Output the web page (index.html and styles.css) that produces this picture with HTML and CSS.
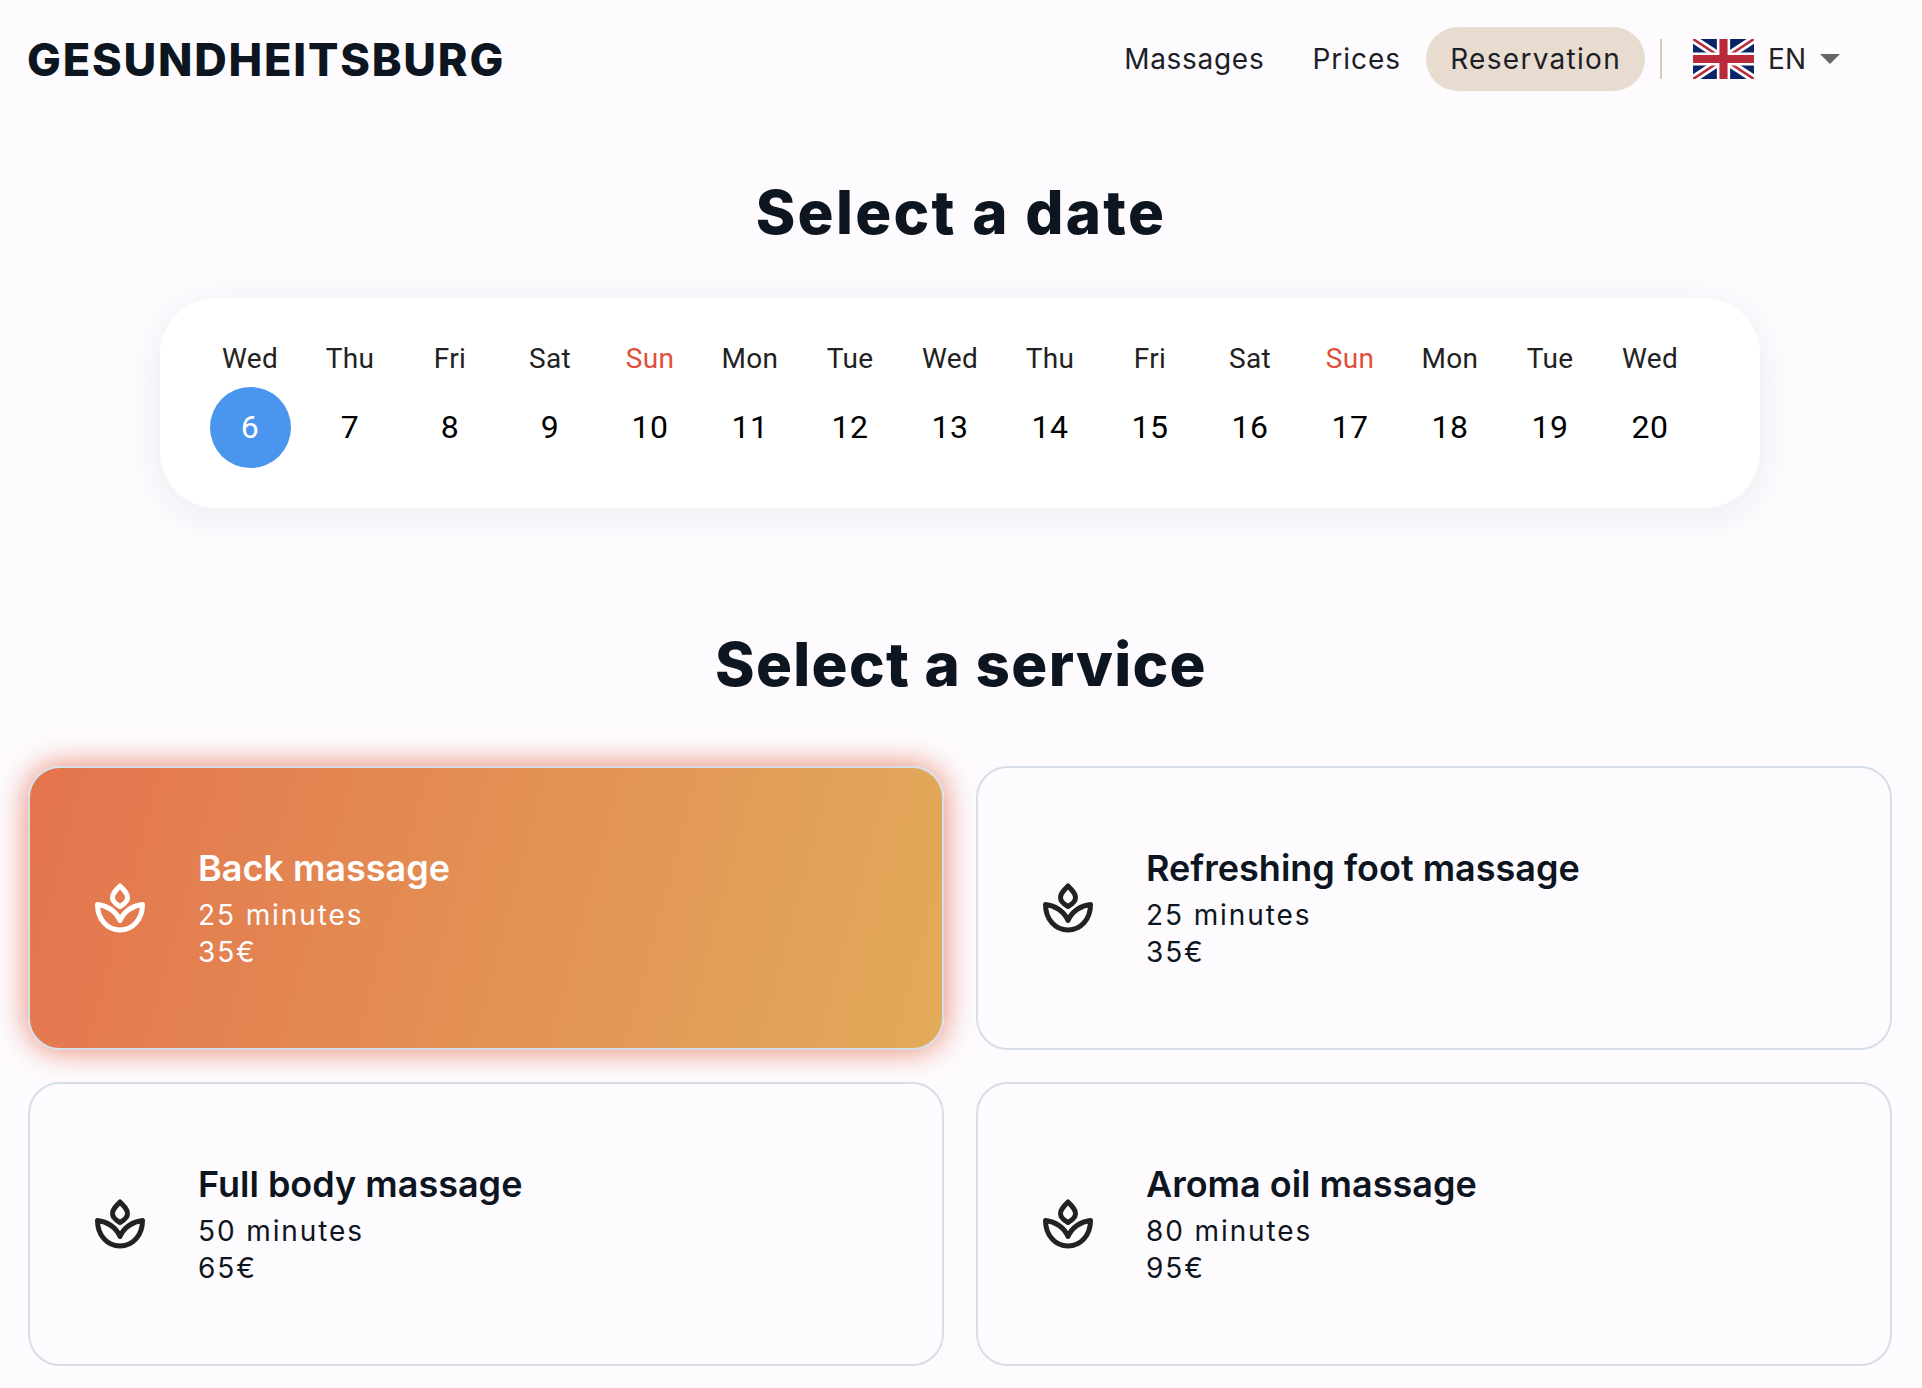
FILE: index.html
```html
<!DOCTYPE html>
<html lang="en">
<head>
  <meta charset="UTF-8">
  <title>Gesundheitsburg</title>
  <link rel="stylesheet" href="styles.css">
</head>
<body>
  <svg class="defs" width="0" height="0">
    <symbol id="lotus" viewBox="0 0 50 50">
      <path d="M25 3C29 7 32.500 10.500 32.500 14.500C32.500 18 29.500 21 25 23.500C20.500 21 17.500 18 17.500 14.500C17.500 10.500 21 7 25 3Z" fill="none" stroke="currentColor" stroke-width="5" stroke-linejoin="round"/>
      <path d="M2.500 21.500C2.500 36 12 47 25 47C38 47 47.500 36 47.500 21.500C38 22.500 29 28 25 37.500C21 28 12 22.500 2.500 21.500Z" fill="none" stroke="currentColor" stroke-width="5" stroke-linejoin="round"/>
    </symbol>
  </svg>

  <header class="topbar">
    <div class="logo">GESUNDHEITSBURG</div>
    <nav class="nav">
      <a class="nav-link first">Massages</a>
      <a class="nav-link">Prices</a>
      <a class="nav-link active">Reservation</a>
      <span class="nav-sep"></span>
      <svg class="flag" viewBox="0 0 60 40" preserveAspectRatio="none">
        <clipPath id="flagclip"><rect width="60" height="40"/></clipPath>
        <g clip-path="url(#flagclip)">
          <rect width="60" height="40" fill="#0a2468"/>
          <path d="M0 0L60 40M60 0L0 40" stroke="#fff" stroke-width="8"/>
          <path d="M0 0L60 40M60 0L0 40" stroke="#b92b3a" stroke-width="2.600"/>
          <path d="M30 0V40M0 20H60" stroke="#fff" stroke-width="13"/>
          <path d="M30 0V40M0 20H60" stroke="#b92b3a" stroke-width="8"/>
        </g>
      </svg>
      <span class="lang">EN</span>
      <span class="caret"></span>
    </nav>
  </header>

  <h2 class="title">Select a date</h2>
  <section class="calendar">
    <div class="day"><span class="dow">Wed</span><span class="num selected">6</span></div>
    <div class="day"><span class="dow">Thu</span><span class="num">7</span></div>
    <div class="day"><span class="dow">Fri</span><span class="num">8</span></div>
    <div class="day"><span class="dow">Sat</span><span class="num">9</span></div>
    <div class="day"><span class="dow sun">Sun</span><span class="num">10</span></div>
    <div class="day"><span class="dow">Mon</span><span class="num">11</span></div>
    <div class="day"><span class="dow">Tue</span><span class="num">12</span></div>
    <div class="day"><span class="dow">Wed</span><span class="num">13</span></div>
    <div class="day"><span class="dow">Thu</span><span class="num">14</span></div>
    <div class="day"><span class="dow">Fri</span><span class="num">15</span></div>
    <div class="day"><span class="dow">Sat</span><span class="num">16</span></div>
    <div class="day"><span class="dow sun">Sun</span><span class="num">17</span></div>
    <div class="day"><span class="dow">Mon</span><span class="num">18</span></div>
    <div class="day"><span class="dow">Tue</span><span class="num">19</span></div>
    <div class="day"><span class="dow">Wed</span><span class="num">20</span></div>
  </section>

  <h2 class="title second">Select a service</h2>
  <section class="services">
    <div class="service active">
      <svg class="lotus"><use href="#lotus"/></svg>
      <div class="info">
        <div class="name">Back massage</div>
        <div class="meta">25 minutes</div>
        <div class="meta">35€</div>
      </div>
    </div>
    <div class="service">
      <svg class="lotus"><use href="#lotus"/></svg>
      <div class="info">
        <div class="name">Refreshing foot massage</div>
        <div class="meta">25 minutes</div>
        <div class="meta">35€</div>
      </div>
    </div>
    <div class="service">
      <svg class="lotus"><use href="#lotus"/></svg>
      <div class="info">
        <div class="name">Full body massage</div>
        <div class="meta">50 minutes</div>
        <div class="meta">65€</div>
      </div>
    </div>
    <div class="service">
      <svg class="lotus"><use href="#lotus"/></svg>
      <div class="info">
        <div class="name">Aroma oil massage</div>
        <div class="meta">80 minutes</div>
        <div class="meta">95€</div>
      </div>
    </div>
  </section>
</body>
</html>
```
FILE: styles.css
```css
* { box-sizing: border-box; }
html, body { margin: 0; }
body { background: #fdfbfe; color: #0d1520; font-family: "Inter", "Open Sans", sans-serif; height: 1388px; overflow: hidden; }
.defs { position: absolute; }

.topbar { display: flex; justify-content: space-between; align-items: center; height: 118px; padding: 0 82px 0 27px; }
.logo { font-size: 45px; font-weight: 800; letter-spacing: 1.8px; }
.nav { display: flex; align-items: center; font-size: 28px; letter-spacing: 1px; color: #1c2026; }
.nav-link { padding: 0 25px; height: 64px; line-height: 64px; border-radius: 32px; }
.nav-link.first { letter-spacing: .7px; padding-right: 23px; }
.nav-link.active { background: #e8dcd0; letter-spacing: 1.3px; padding: 0 24px; }
.nav-sep { width: 2px; height: 40px; background: #d8c9bc; margin: 0 31px 0 15px; }
.flag { width: 61px; height: 40px; }
.lang { margin: 0 14px; color: #222; letter-spacing: 0; }
.caret { border-left: 10px solid transparent; border-right: 10px solid transparent; border-top: 10px solid #666; }

.title { margin: 58px 0 50px; font-size: 60px; line-height: 72px; font-weight: 800; letter-spacing: 2.3px; text-align: center; }
.title.second { margin: 120px 0 66px; letter-spacing: 1.3px; }

.calendar { display: flex; width: 1600px; height: 210px; margin-left: 160px; padding: 40px; background: #fff; border-radius: 56px; box-shadow: 0 8px 40px rgba(40, 30, 70, .07); font-family: "Roboto", sans-serif; }
.day { width: 100px; display: flex; flex-direction: column; align-items: center; gap: 7px; }
.dow { font-size: 28px; line-height: 42px; color: #222; letter-spacing: .3px; }
.dow.sun { color: #e0503c; }
.num { width: 81px; height: 81px; line-height: 81px; text-align: center; border-radius: 50%; font-size: 32px; color: #000; letter-spacing: .5px; }
.num.selected { background: #4a96ee; color: #fff; }

.services { display: grid; grid-template-columns: 916px 916px; grid-auto-rows: 284px; gap: 32px; padding-left: 28px; }
.service { display: flex; align-items: center; gap: 53px; padding-left: 65px; border: 2px solid #d6dee9; border-radius: 32px; }
.service.active { background: linear-gradient(105deg, #e4744e, #e2ab5a); color: #fff; box-shadow: 0 0 30px rgba(228, 100, 70, .8); }
.lotus { width: 50px; height: 50px; color: #222; }
.active .lotus { color: #fff; }
.name { font-size: 36px; font-weight: 600; line-height: 46px; margin-bottom: 6px; }
.meta { font-size: 28px; line-height: 37px; letter-spacing: 1.9px; }
```
